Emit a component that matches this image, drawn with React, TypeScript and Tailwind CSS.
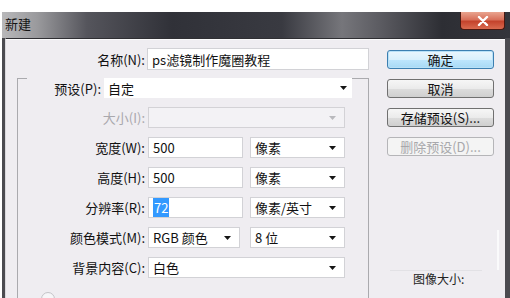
const cjk = "font-['Noto_Sans_CJK_SC',sans-serif]";

function Arrow({ dim }: { dim?: boolean }) {
  return (
    <svg width="7" height="4" viewBox="0 0 7 4" className="shrink-0">
      <path d="M0 0h7L3.5 4z" fill={dim ? "#b9b9bd" : "#151515"} />
    </svg>
  );
}

function Box({
  w,
  h = "h-[21px]",
  children,
  select,
  disabled,
}: {
  w: string;
  h?: string;
  children?: React.ReactNode;
  select?: boolean;
  disabled?: boolean;
}) {
  return (
    <div
      className={`${w} ${h} shrink-0 flex items-center pl-[4px] pr-[8px] border ${
        disabled ? "bg-[#f3f2f5] border-[#d3d2d6]" : "bg-white border-[#d2d2d6]"
      } text-[13px] text-[#111] leading-none`}
    >
      <span className="flex-1 whitespace-nowrap">{children}</span>
      {select && <Arrow dim={disabled} />}
    </div>
  );
}

function Row({ label, disabled, children }: { label: string; disabled?: boolean; children: React.ReactNode }) {
  return (
    <div className="flex items-center h-[21px]">
      <div
        className={`w-[127px] text-right text-[13px] leading-none whitespace-nowrap ${
          disabled ? "text-[#a9a8ad]" : "text-[#111]"
        }`}
      >
        {label}
      </div>
      <div className="ml-[3px] flex gap-[7px]">{children}</div>
    </div>
  );
}

function Btn({ children, primary, disabled }: { children: React.ReactNode; primary?: boolean; disabled?: boolean }) {
  const look = primary
    ? "border-[#3c7fb1] bg-[linear-gradient(#eaf6fd,#d9f0fc_50%,#bee6fd_51%,#a7d9f5)] shadow-[inset_0_0_0_1px_#b9e1f7]"
    : disabled
    ? "border-[#b5b5b8] bg-[#f4f4f4] text-[#a8a8ab]"
    : "border-[#707070] bg-[linear-gradient(#f6f6f6,#ebebeb_50%,#dddddd_51%,#cfcfcf)]";
  return (
    <div
      className={`h-[19px] w-[107px] rounded-[3px] border flex items-center justify-center text-[13px] leading-none ${look} ${
        disabled ? "" : "text-[#111]"
      }`}
    >
      {children}
    </div>
  );
}

export default function App() {
  return (
    <div className={`w-[510px] h-[298px] overflow-hidden bg-white pt-[12px] pl-[2px] ${cjk}`}>
      <div className="h-[286px] flex flex-col bg-[#4b4b50]">
        {/* title bar */}
        <div className="h-[26px] shrink-0 flex items-start bg-[linear-gradient(90deg,#b8b8ba_0px,#9a9a9d_35px,#55555c_85px,#303138_170px,#393a41_280px,#76767b_340px,#5a5a60_380px,#2d2e34_440px,#34353b_508px)]">
          <span className="ml-[3px] mt-[5px] text-[13px] leading-none text-[#151515]">新建</span>
          <div className="ml-auto mr-[5px] w-[45px] h-[18px] rounded-b-[4px] border border-t-0 border-[#4a1810] bg-[linear-gradient(#e9a48f,#d8705a_45%,#c4432c_55%,#d96a4f)] flex items-center justify-center">
            <svg width="12" height="10" viewBox="0 0 12 10">
              <path d="M2 1l8 8M10 1l-8 8" stroke="#fff" strokeWidth="2.4" strokeLinecap="round" />
            </svg>
          </div>
        </div>

        {/* body */}
        <div className="flex-1 ml-[3px] mr-[5px] bg-[#efedf1] border-t border-l border-t-[#2f2f33] border-l-[#d9d8dc] shadow-[inset_0_1px_0_#fbfbfc] flex">
          {/* left column */}
          <div className="w-[370px] shrink-0 flex flex-col">
            <div className="mt-[9px] flex items-center h-[22px]">
              <div className="w-[139px] text-right text-[13px] leading-none text-[#111]">名称(N):</div>
              <div className="ml-[2px]">
                <Box w="w-[222px]" h="h-[22px]">ps滤镜制作魔圈教程</Box>
              </div>
            </div>

            <div className="mt-[8px] ml-[11px] w-[352px] flex-1 border-l border-r border-[#aaaaae] flex flex-col gap-[9px]">
              <div className="flex items-start h-[20px]">
                <div className="w-[9px] border-t border-[#aaaaae]" />
                <div className="w-[74px] self-center text-right text-[13px] leading-none text-[#111]">预设(P):</div>
                <div className="ml-[3px] w-[248px] h-[20px] bg-white flex items-center pl-[4px] pr-[5px] text-[13px] leading-none text-[#111]">
                  <span className="flex-1">自定</span>
                  <Arrow />
                </div>
                <div className="flex-1 border-t border-[#aaaaae]" />
              </div>

              <Row label="大小(I):" disabled>
                <Box w="w-[197px]" select disabled />
              </Row>
              <Row label="宽度(W):">
                <Box w="w-[95px]">500</Box>
                <Box w="w-[95px]" select>像素</Box>
              </Row>
              <Row label="高度(H):">
                <Box w="w-[95px]">500</Box>
                <Box w="w-[95px]" select>像素</Box>
              </Row>
              <Row label="分辨率(R):">
                <Box w="w-[95px]">
                  <span className="bg-[#3399ff] text-white px-[1px]">72</span>
                </Box>
                <Box w="w-[95px]" select>像素/英寸</Box>
              </Row>
              <Row label="颜色模式(M):">
                <div className="flex gap-[10px]">
                  <Box w="w-[92px]" select>RGB 颜色</Box>
                  <Box w="w-[95px]" select>8 位</Box>
                </div>
              </Row>
              <Row label="背景内容(C):">
                <Box w="w-[197px]" select>白色</Box>
              </Row>
              <div className="ml-[23px] mt-[5px] w-[14px] h-[14px] rounded-full border border-[#c4c4c8] bg-[#f6f6f8]" />
            </div>
          </div>

          {/* right column */}
          <div className="ml-[11px] flex-1 flex flex-col pt-[11px]">
            <div className="flex flex-col gap-[10px]">
              <Btn primary>确定</Btn>
              <Btn>取消</Btn>
              <Btn>存储预设(S)...</Btn>
              <Btn disabled>删除预设(D)...</Btn>
            </div>
            <div className="mt-[74px] w-[112px] h-[40px] border-r-2 border-[#fafafb]" />
            <div className="border-t border-[#e2e1e5] w-[92px] ml-[3px]" />
            <div className="ml-[26px] mt-[2px] text-[12px] leading-none text-[#222]">图像大小:</div>
          </div>
        </div>
      </div>
    </div>
  );
}
